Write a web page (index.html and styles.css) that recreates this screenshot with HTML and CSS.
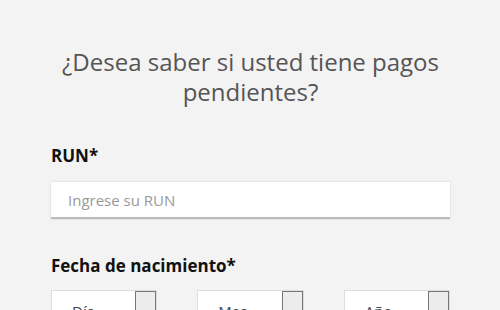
FILE: index.html
```html
<!DOCTYPE html>
<html lang="es">
<head>
  <meta charset="utf-8"/>
  <title>Consulta de pagos pendientes</title>
  <link rel="stylesheet" href="styles.css">
</head>
<body>
  <div class="consulta">
    <h2 class="titulo">¿Desea saber si usted tiene pagos pendientes?</h2>

    <label for="run">RUN*</label>
    <input type="text" id="run" placeholder="Ingrese su RUN">

    <label>Fecha de nacimiento*</label>
    <div class="fecha">
      <div class="combo"><span>Día</span><i class="flecha"></i></div>
      <div class="combo"><span>Mes</span><i class="flecha"></i></div>
      <div class="combo"><span>Año</span><i class="flecha"></i></div>
    </div>
  </div>
</body>
</html>
```

FILE: styles.css
```css
body {
  font-family: "Open Sans", Arial, sans-serif;
  margin: 0;
  background: #f4f3f3;
}
.consulta {
  padding: 47px 50px 0 51px;
}
.titulo {
  margin: 0 0 37px;
  font-size: 24px;
  line-height: 30px;
  font-weight: normal;
  color: #555;
  text-align: center;
}
label {
  display: block;
  font-weight: bold;
  font-size: 17px;
  color: #111;
  margin-bottom: 15px;
}
input {
  display: block;
  width: 100%;
  box-sizing: border-box;
  height: 37px;
  padding: 0 17px;
  font-family: inherit;
  font-size: 15px;
  border: 0;
  border-bottom: 2px solid #bbb;
  box-shadow: 0 0 2px rgba(0, 0, 0, 0.15);
  background: #fff;
  margin-bottom: 35px;
}
input::placeholder {
  color: #999;
}
.fecha {
  display: grid;
  grid-template-columns: 1fr 1fr 1fr;
  gap: 40px;
  margin-top: -2px;
}
.combo {
  display: flex;
  height: 38px;
  background: #fff;
  border: 1px solid #ddd;
  border-bottom: 0;
}
.combo span {
  flex: 1;
  padding: 10px 0 0 20px;
  font-size: 15px;
  color: #444;
}
.flecha {
  width: 19px;
  background: #ececec;
  border: 1px solid #777;
  border-bottom: 0;
}
```
